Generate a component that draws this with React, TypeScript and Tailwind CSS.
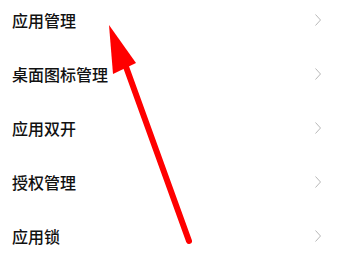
const items = ['应用管理', '桌面图标管理', '应用双开', '授权管理', '应用锁'];

function Chevron() {
  return (
    <svg width="8" height="14" viewBox="0 0 8 14" className="shrink-0">
      <path d="M1.5 1.5 L6.5 7 L1.5 12.5" fill="none" stroke="#b8b8b8" strokeWidth="1" />
    </svg>
  );
}

export default function App() {
  return (
    <div className="relative w-[339px] h-[257px] overflow-hidden bg-white font-['Noto_Sans_CJK_SC',sans-serif]">
      <div className="flex flex-col -mt-[7px]">
        {items.map((label) => (
          <div key={label} className="flex h-[54px] items-center justify-between pl-[12px] pr-[17px]">
            <span className="text-[16px] font-medium leading-none text-[#111]">{label}</span>
            <Chevron />
          </div>
        ))}
      </div>
      <svg className="absolute inset-0 pointer-events-none" width="339" height="257" viewBox="0 0 339 257">
        <line x1="125" y1="64" x2="189" y2="241" stroke="#ff0000" strokeWidth="6" strokeLinecap="round" />
        <polygon points="109,25 113,74 136,63" fill="#ff0000" />
      </svg>
    </div>
  );
}
